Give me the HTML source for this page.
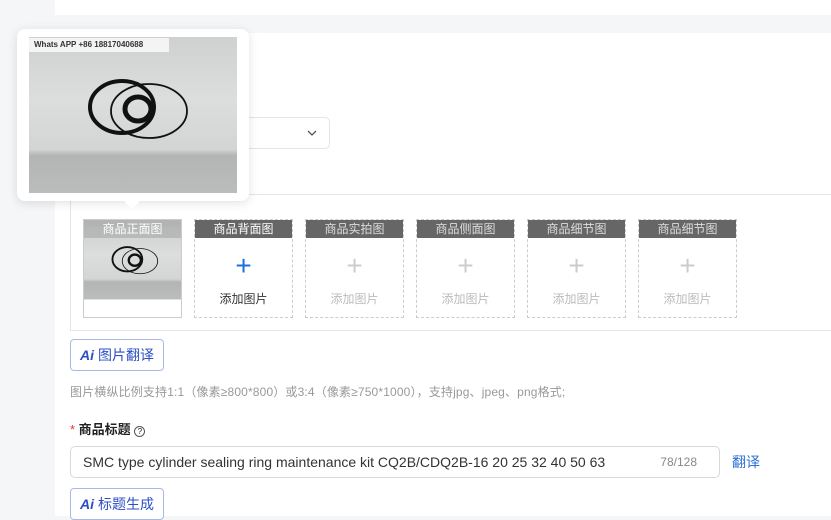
<!DOCTYPE html><html><head><meta charset="utf-8"><style>
*{margin:0;padding:0;box-sizing:border-box}
body{width:831px;height:516px;background:#f5f6f8;font-family:"Liberation Sans","Noto Sans CJK SC",sans-serif;position:relative;overflow:hidden}
.a{position:absolute}
.slot{position:absolute;top:219px;width:99px;height:99px;border:1px dashed #ccc;background:#fff}
.slot .h{height:18px;background:#666;color:#fff;font-size:12px;text-align:center;line-height:18px}
.slot.dis .h{color:#ddd}
.slot .p{text-align:center;font-size:28px;color:#1a6fe0;line-height:1;margin-top:14px;font-weight:300}
.slot.dis .p{color:#ccc}
.slot .t{text-align:center;font-size:12px;color:#333;margin-top:10px}
.slot.dis .t{color:#bbb}
.btn{position:absolute;left:70px;width:94px;height:32px;border:1px solid #aab8e6;border-radius:4px;background:#fff;color:#2c4fc4;font-size:14px;line-height:30px;padding-left:9px}
.btn b{font-style:italic;font-weight:bold;margin-right:4px}
</style></head><body>
<svg width="0" height="0" style="position:absolute"><defs>
<linearGradient id="g" x1="0" y1="0" x2="0" y2="1"><stop offset="0" stop-color="#cfd1d0"/><stop offset=".4" stop-color="#dcdedd"/><stop offset=".72" stop-color="#d3d5d4"/><stop offset=".76" stop-color="#b3b5b4"/><stop offset="1" stop-color="#bbbdbc"/></linearGradient>
<g id="ph"><rect width="208" height="156" fill="url(#g)"/>
<ellipse cx="93" cy="70" rx="32" ry="26" fill="none" stroke="#111" stroke-width="4"/>
<ellipse cx="120" cy="74" rx="38" ry="27" fill="none" stroke="#111" stroke-width="1.8"/>
<ellipse cx="109" cy="72" rx="13" ry="12" fill="none" stroke="#111" stroke-width="5"/>
</g></defs></svg>
<div class="a" style="left:55px;top:0;width:776px;height:15px;background:#fff"></div>
<div class="a" style="left:55px;top:33px;width:776px;height:483px;background:#fff"></div>
<div class="a" style="left:240px;top:117px;width:90px;height:32px;border:1px solid #e3e5e8;border-radius:5px;background:#fff"></div>
<svg class="a" style="left:305px;top:127px" width="14" height="12"><path d="M3 4l4 4 4-4" stroke="#555" fill="none" stroke-width="1.3"/></svg>
<div class="a" style="left:70px;top:194px;width:761px;height:137px;border:1px solid #e6e6e6;border-right:none"></div>
<div class="slot" style="left:83px;border:1px solid #ccc">
 <svg class="a" style="left:0;top:0" width="97" height="86" viewBox="0 0 208 184" preserveAspectRatio="none"><use href="#ph" transform="translate(0,14)"/><rect width="208" height="14" fill="#c9cbca"/></svg>
 <div class="h" style="position:relative;background:rgba(150,150,150,.45)">商品正面图</div>
</div>
<div class="slot" style="left:194px"><div class="h">商品背面图</div><div class="p">+</div><div class="t">添加图片</div></div>
<div class="slot dis" style="left:305px"><div class="h">商品实拍图</div><div class="p">+</div><div class="t">添加图片</div></div>
<div class="slot dis" style="left:416px"><div class="h">商品侧面图</div><div class="p">+</div><div class="t">添加图片</div></div>
<div class="slot dis" style="left:527px"><div class="h">商品细节图</div><div class="p">+</div><div class="t">添加图片</div></div>
<div class="slot dis" style="left:638px"><div class="h">商品细节图</div><div class="p">+</div><div class="t">添加图片</div></div>
<div class="a" style="left:17px;top:29px;width:232px;height:172px;background:#fff;border-radius:8px;box-shadow:0 2px 10px rgba(0,0,0,.12)"></div>
<div class="a" style="left:127px;top:197px;width:10px;height:10px;background:#fff;transform:rotate(45deg)"></div>
<svg class="a" style="left:29px;top:37px" width="208" height="156"><use href="#ph"/></svg>
<div class="a" style="left:29px;top:38px;width:140px;height:14px;background:#f4f4f4;font-size:8px;line-height:14px;padding-left:5px;color:#333;font-weight:bold">Whats APP +86 18817040688</div>
<div class="btn" style="top:339px"><b>Ai</b>图片翻译</div>
<div class="a" style="left:70px;top:383px;font-size:12px;color:#999;letter-spacing:.15px">图片横纵比例支持1:1（像素≥800*800）或3:4（像素≥750*1000），支持jpg、jpeg、png格式;</div>
<div class="a" style="left:70px;top:419px;font-size:13px;color:#222;font-weight:bold"><span style="color:#e33;font-weight:normal">* </span>商品标题 <span style="display:inline-block;width:11px;height:11px;border:1px solid #555;border-radius:50%;font-size:8px;text-align:center;line-height:9px;font-weight:normal">?</span></div>
<div class="a" style="left:70px;top:446px;width:650px;height:32px;border:1px solid #d6d8dc;border-radius:5px;font-size:14px;line-height:30px;padding-left:12px;color:#333">SMC type cylinder sealing ring maintenance kit CQ2B/CDQ2B-16 20 25 32 40 50 63<span style="position:absolute;right:22px;font-size:12px;color:#888">78/128</span></div>
<div class="a" style="left:732px;top:452px;font-size:14px;color:#2c6fd6">翻译</div>
<div class="btn" style="top:488px"><b>Ai</b>标题生成</div>
</body></html>
